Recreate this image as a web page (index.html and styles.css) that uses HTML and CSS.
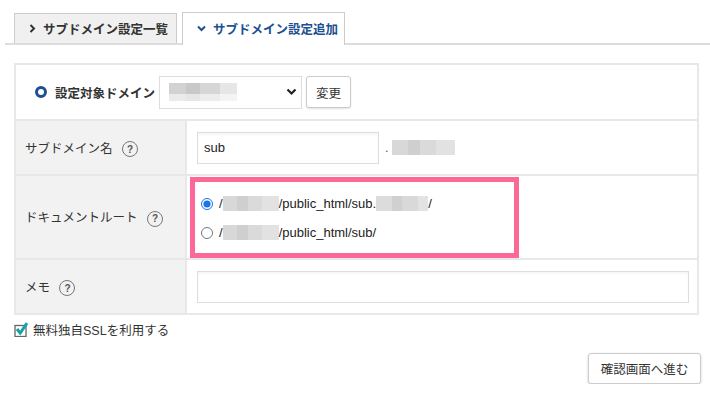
FILE: index.html
```html
<!DOCTYPE html>
<html>
<head>
  <title>サブドメイン設定追加</title>
  <link rel="stylesheet" href="styles.css">
</head>
<body>

  <div class="tab-bar">
    <div class="tab">
      <svg class="tab-icon" width="7" height="9" viewBox="0 0 7 9"><path d="M1.5 1 L5 4.5 L1.5 8" fill="none" stroke="#333" stroke-width="2"/></svg>
      サブドメイン設定一覧
    </div>
    <div class="tab active">
      <svg class="tab-icon" width="9" height="7" viewBox="0 0 9 7"><path d="M1 1.5 L4.5 5 L8 1.5" fill="none" stroke="#1d4f91" stroke-width="2"/></svg>
      サブドメイン設定追加
    </div>
  </div>

  <table class="form-table">
    <tr class="row-target">
      <td colspan="2">
        <div class="target">
          <span class="ring"></span>
          <span class="target-label">設定対象ドメイン</span>
          <div class="select-box">
            <span class="blur blur-select"></span>
            <svg width="11" height="8" viewBox="0 0 11 8"><path d="M1.5 1.5 L5.5 5.5 L9.5 1.5" fill="none" stroke="#222" stroke-width="2.2"/></svg>
          </div>
          <button class="btn-small">変更</button>
        </div>
      </td>
    </tr>
    <tr class="row-name">
      <th>サブドメイン名 <span class="help">?</span></th>
      <td>
        <div class="name-line">
          <input class="text-input name-input" type="text" value="sub">
          <span class="dot">.</span>
          <span class="blur blur-domain"></span>
        </div>
      </td>
    </tr>
    <tr class="row-root">
      <th>ドキュメントルート <span class="help">?</span></th>
      <td class="root-cell">
        <div class="highlight">
          <label class="root-option">
            <input type="radio" name="root" checked>
            <span>/</span><span class="blur blur-user"></span><span>/public_html/sub.</span><span class="blur blur-host"></span><span>/</span>
          </label>
          <label class="root-option">
            <input type="radio" name="root">
            <span>/</span><span class="blur blur-user"></span><span>/public_html/sub/</span>
          </label>
        </div>
      </td>
    </tr>
    <tr class="row-memo">
      <th>メモ <span class="help">?</span></th>
      <td><input class="text-input memo-input" type="text"></td>
    </tr>
  </table>

  <div class="ssl-line">
    <svg width="15" height="15" viewBox="0 0 15 15">
      <rect x="1" y="3.5" width="11" height="11" fill="#fff" stroke="#666" stroke-width="1.3"/>
      <path d="M3 7 L6.2 11 L13 1.2" fill="none" stroke="#17a2a8" stroke-width="3"/>
    </svg>
    <span>無料独自SSLを利用する</span>
  </div>

  <div class="actions">
    <button class="btn-next">確認画面へ進む</button>
  </div>

</body>
</html>
```

FILE: styles.css
```css
body {
  margin: 0;
  background-color: #ffffff;
  font-family: "Liberation Sans", "Noto Sans CJK JP", sans-serif;
  font-size: 12.5px;
  color: #333333;
}

/* tabs */
.tab-bar {
  display: flex;
  align-items: flex-end;
  gap: 5px;
  height: 31px;
  margin: 12px 0 0 5px;
  padding-left: 9px;
  border-bottom: 2px solid #dddddd;
}

.tab {
  display: flex;
  align-items: center;
  box-sizing: border-box;
  width: 163px;
  height: 30px;
  padding-left: 14px;
  background-color: #f0f0f0;
  border: 1px solid #cccccc;
  border-bottom: none;
  font-weight: bold;
  color: #333333;
}

.tab.active {
  height: 33px;
  margin-bottom: -2px;
  padding-bottom: 2px;
  background-color: #ffffff;
  color: #1d4f91;
}

.tab-icon {
  margin-right: 7px;
}

/* form table */
.form-table {
  margin: 18px 0 0 14px;
  width: 685px;
  border-collapse: collapse;
  border: 2px solid #e8e8e8;
}

.form-table th,
.form-table td {
  border: 2px solid #e8e8e8;
  padding: 0;
}

.form-table th {
  width: 160px;
  background-color: #f2f2f2;
  text-align: left;
  font-weight: normal;
  padding-left: 9px;
}

.row-target td { height: 54px; }
.row-name td, .row-name th { height: 53px; }
.row-root td, .row-root th { height: 79px; }
.row-memo td, .row-memo th { height: 53px; }

.target {
  display: flex;
  align-items: center;
  padding-left: 19px;
}

.ring {
  width: 6px;
  height: 6px;
  border: 3px solid #1d4f91;
  border-radius: 50%;
  margin-right: 8px;
}

.target-label {
  font-weight: bold;
  margin-right: 4px;
}

.select-box {
  display: flex;
  align-items: center;
  justify-content: space-between;
  box-sizing: border-box;
  width: 143px;
  height: 33px;
  padding: 0 4px 0 9px;
  border: 1px solid #dddddd;
  background-color: #ffffff;
  margin-right: 4px;
}

.btn-small {
  height: 32px;
  width: 45px;
  padding: 0;
  background-color: #ffffff;
  border: 1px solid #cccccc;
  border-radius: 3px;
  box-shadow: 0 1px 2px rgba(0, 0, 0, 0.12);
  font-family: inherit;
  font-size: 12.5px;
  color: #333333;
}

/* blurred (masked) values */
.blur {
  display: inline-block;
  height: 15px;
  background:
    linear-gradient(90deg, #d8d8d8 0 25%, #cfcfcf 25% 45%, #dadada 45% 70%, #e2e2e2 70% 100%);
}

.blur-select {
  width: 68px;
  height: 18px;
  background:
    linear-gradient(180deg, rgba(255,255,255,0) 0 60%, rgba(255,255,255,0.55) 60% 100%),
    linear-gradient(90deg, #d2d2d2 0 25%, #c8c8c8 25% 45%, #d6d6d6 45% 75%, #e6e6e6 75% 100%);
}

.blur-domain { width: 63px; }
.blur-user { width: 56px; }
.blur-host { width: 52px; background: linear-gradient(90deg, #dcdcdc 0 30%, #d0d0d0 30% 50%, #d9d9d9 50% 80%, #e3e3e3 80% 100%); }

.help {
  display: inline-flex;
  align-items: center;
  justify-content: center;
  box-sizing: border-box;
  width: 16px;
  height: 16px;
  margin-left: 6px;
  border: 1.5px solid #777777;
  border-radius: 50%;
  font-family: "Liberation Sans", sans-serif;
  font-size: 10px;
  font-weight: bold;
  color: #555555;
  vertical-align: middle;
}

.name-line {
  display: flex;
  align-items: center;
  padding-left: 10px;
}

.text-input {
  box-sizing: border-box;
  height: 32px;
  border: 1px solid #dddddd;
  box-shadow: inset 0 2px 2px rgba(0, 0, 0, 0.04);
  padding: 0 6px;
  font-family: "Liberation Sans", sans-serif;
  font-size: 13px;
  color: #222222;
}

.name-input { width: 182px; }

.dot {
  margin: 0 4px 0 6px;
  color: #555555;
}

.memo-input {
  width: 492px;
  margin-left: 10px;
}

/* highlighted document root choices */
.root-cell {
  vertical-align: top;
}

.highlight {
  box-sizing: border-box;
  width: 329px;
  height: 81px;
  margin: 1px 0 0 3px;
  padding-top: 7px;
  border: 5px solid #fd6897;
}

.root-option {
  display: flex;
  align-items: center;
  height: 29px;
  padding-left: 6px;
  font-size: 13px;
  color: #222222;
}

.root-option input {
  margin: 0 6px 0 0;
  width: 12px;
  height: 12px;
  accent-color: #1a73e8;
}

/* bottom */
.ssl-line {
  display: flex;
  align-items: center;
  margin: 5px 0 0 14px;
}

.ssl-line svg {
  margin-right: 4px;
}

.actions {
  display: flex;
  justify-content: flex-end;
  margin: 14px 9px 0 0;
}

.btn-next {
  width: 113px;
  height: 31px;
  background-color: #ffffff;
  border: 1px solid #cccccc;
  border-radius: 3px;
  box-shadow: 0 1px 3px rgba(0, 0, 0, 0.18);
  font-family: inherit;
  font-size: 12.5px;
  color: #333333;
}
```
